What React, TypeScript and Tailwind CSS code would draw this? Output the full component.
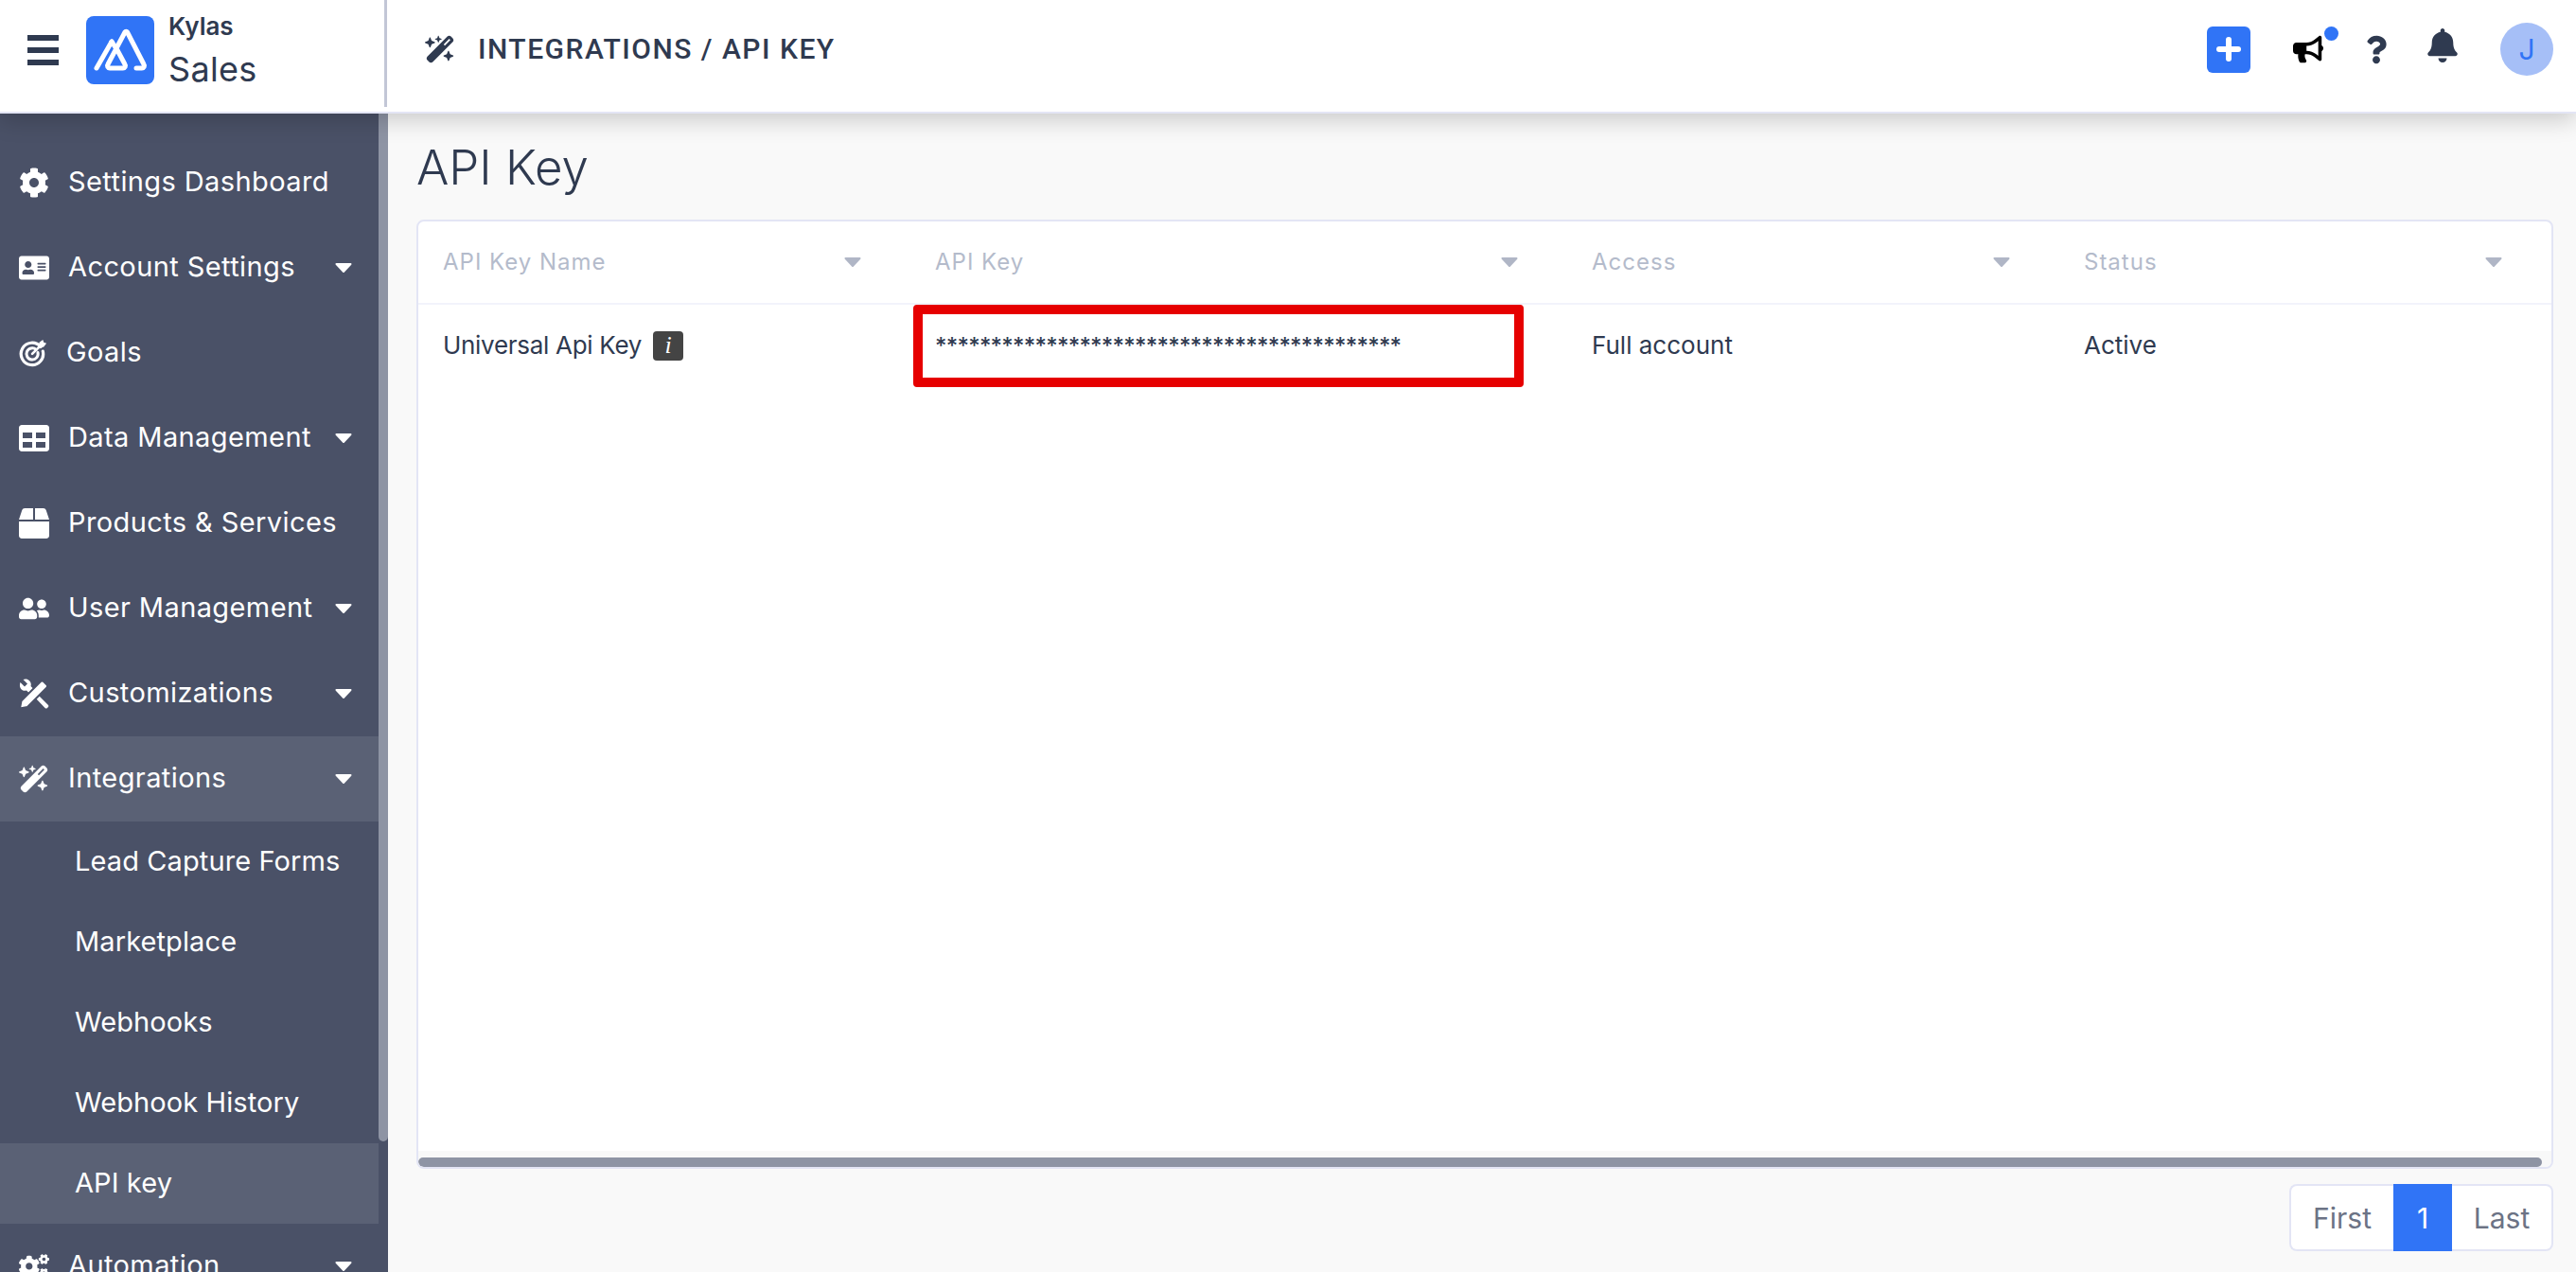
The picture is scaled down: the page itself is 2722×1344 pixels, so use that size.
import type { ReactNode } from "react";
import { FaBell, FaBox, FaBullhorn, FaCog, FaCogs, FaQuestion, FaTable, FaUserFriends, FaAddressCard } from "react-icons/fa";
import { FaWandMagicSparkles } from "react-icons/fa6";

const Caret = ({ className }: { className: string }) => (
  <svg viewBox="0 0 18 10" className={className}>
    <path d="M1.5 1 H16.5 L9 9 Z" fill="currentColor" stroke="currentColor" strokeWidth="2" strokeLinejoin="round" />
  </svg>
);

const GoalIcon = () => (
  <svg viewBox="0 0 32 32" className="w-[30px] h-[32px]" fill="none" stroke="currentColor">
    <path d="M24.5 9 A12.5 12.5 0 1 0 27 14" strokeWidth="3.4" strokeLinecap="round" />
    <path d="M19.5 12.3 A6.5 6.5 0 1 0 21.3 15.4" strokeWidth="3.2" strokeLinecap="round" />
    <path d="M15 17 L25 7" strokeWidth="2.8" strokeLinecap="round" />
    <path d="M22 9 L23 4 L27 1 L28 4 L31 5 L28 9 L23.5 10.5 Z" fill="currentColor" stroke="none" />
  </svg>
);

const ToolsIcon = () => (
  <svg viewBox="0 0 32 32" className="w-[32px] h-[32px]" fill="currentColor">
    <path d="M1.5 4 L6 8.5 L9 5.5 L4.5 1 C9 -1 14 3 12.5 8 L15 10.5 L10.5 15 L8 12.5 C3 14 -0.5 9 1.5 4 Z" />
    <path d="M18 21 L21 18 L30.5 27.5 A2 2 0 0 1 30.5 30.5 L30 31 A2 2 0 0 1 27.5 31 Z" />
    <path d="M1 31.5 L2.5 23.5 L23 3 A2.5 2.5 0 0 1 26 3 L29.5 6.5 A2.5 2.5 0 0 1 29.5 9.5 L9 30 Z" stroke="#4a5167" strokeWidth="2" />
  </svg>
);

const Logo = () => (
  <div className="w-[72px] h-[72px] rounded-[8px] bg-[#3074f6]">
    <svg viewBox="0 0 72 72" className="w-full h-full" fill="none" stroke="white" strokeWidth="5" strokeLinecap="round" strokeLinejoin="round">
      <path d="M11 55 L27 27" />
      <path d="M27 27 L31 33" />
      <path d="M53 55 H59 A2.5 2.5 0 0 0 61 51 L43.5 17 A1.5 1.5 0 0 0 41 17 L23 51 A2.5 2.5 0 0 0 25 55 H39 A2.5 2.5 0 0 0 41 51 L33 36" />
    </svg>
  </div>
);

const NavItem = ({ icon, label, caret, active, boxClass }: { icon: ReactNode; label: string; caret?: boolean; active?: boolean; boxClass?: string }) => (
  <div className={`h-[90px] shrink-0 flex items-center pl-[20px] pr-[28px] text-white ${active ? "bg-[#5a6175]" : ""}`}>
    <div className={boxClass ?? "w-[52px]"}>{icon}</div>
    <span className="pb-[3px] text-[29px] leading-none tracking-[0.4px]">{label}</span>
    {caret && <Caret className="w-[18px] h-[10px] ml-auto" />}
  </div>
);

const SubItem = ({ label, active }: { label: string; active?: boolean }) => (
  <div className={`h-[85px] shrink-0 flex items-center pl-[79px] pb-[3px] text-[29px] leading-none tracking-[0.1px] text-white ${active ? "bg-[#5a6175]" : ""}`}>{label}</div>
);

const HeadCell = ({ label }: { label: string }) => (
  <div className="flex items-center justify-between pl-[26px] pr-[52px]">
    <span className="text-[24px] leading-none tracking-[1px] text-[#b4bbcb]">{label}</span>
    <Caret className="w-[18px] h-[10px] text-[#b0b6c6]" />
  </div>
);

const iconClass = "w-[32px] h-[32px]";

export default function App() {
  return (
    <div className="h-screen overflow-hidden flex flex-col bg-[#f9f9f9] font-[Inter,sans-serif] text-[#2f3a50]">
      <header className="relative z-10 h-[120px] shrink-0 flex bg-white border-b-2 border-[#e3e5f5] shadow-[0_6px_24px_rgba(0,0,0,0.2)]">
        <div className="w-[406px] flex items-center pl-[29px] pb-[12px]">
          <div className="flex flex-col gap-[7px] w-[33px]">
            <span className="h-[6px] bg-[#2f3a50]" />
            <span className="h-[6px] bg-[#2f3a50]" />
            <span className="h-[6px] bg-[#2f3a50]" />
          </div>
          <div className="ml-[29px]"><Logo /></div>
          <div className="ml-[15px] flex flex-col gap-[8px] pb-[3px]">
            <span className="text-[26px] leading-[34px] font-semibold">Kylas</span>
            <span className="text-[36px] leading-[40px] tracking-[0.3px]">Sales</span>
          </div>
        </div>
        <div className="w-[3px] h-[113px] bg-[#c2c6d6]" />
        <div className="flex-1 flex items-center pl-[40px] pb-[14px]">
          <FaWandMagicSparkles className="w-[32px] h-[32px]" />
          <span className="ml-[24px] font-[Roboto,sans-serif] text-[30px] leading-none font-medium tracking-[1.5px]">INTEGRATIONS / API KEY</span>
        </div>
        <div className="flex items-center pr-[24px] pb-[14px]">
          <div className="w-[46px] h-[49px] rounded-[6px] bg-[#3074f6] flex items-center justify-center">
            <span className="relative block w-[26px] h-[26px]">
              <span className="absolute left-[10px] top-0 w-[6px] h-[26px] rounded-full bg-white" />
              <span className="absolute left-0 top-[10px] w-[26px] h-[6px] rounded-full bg-white" />
            </span>
          </div>
          <div className="relative ml-[45px]">
            <FaBullhorn className="w-[32px] h-[32px] text-black" />
            <span className="absolute -top-[8px] -right-[16px] w-[15px] h-[15px] rounded-full bg-[#3074f6]" />
          </div>
          <FaQuestion className="ml-[45px] w-[22px] h-[31px]" />
          <FaBell className="ml-[43px] w-[32px] h-[36px] -mt-[8px]" />
          <div className="ml-[45px] w-[56px] h-[56px] rounded-full bg-[#a6bff7] flex items-center justify-center text-[30px] leading-none text-[#3074f6]">J</div>
        </div>
      </header>

      <div className="flex-1 flex min-h-0">
        <aside className="w-[410px] shrink-0 flex bg-[#4a5167] overflow-hidden">
          <nav className="w-[400px] shrink-0 pt-[28px] flex flex-col">
            <NavItem icon={<FaCog className={iconClass} />} label="Settings Dashboard" />
            <NavItem icon={<FaAddressCard className={iconClass} />} label="Account Settings" caret />
            <NavItem icon={<GoalIcon />} label="Goals" boxClass="w-[50px]" />
            <NavItem icon={<FaTable className={iconClass} />} label="Data Management" caret />
            <NavItem icon={<FaBox className={iconClass} />} label="Products & Services" />
            <NavItem icon={<FaUserFriends className={iconClass} />} label="User Management" caret />
            <NavItem icon={<ToolsIcon />} label="Customizations" caret />
            <NavItem icon={<FaWandMagicSparkles className={iconClass} />} label="Integrations" caret active />
            <SubItem label="Lead Capture Forms" />
            <SubItem label="Marketplace" />
            <SubItem label="Webhooks" />
            <SubItem label="Webhook History" />
            <SubItem label="API key" active />
            <NavItem icon={<FaCogs className={iconClass} />} label="Automation" caret />
          </nav>
          <div className="w-[10px] h-[1086px] rounded-b-[5px] bg-[#8e94a4]" />
        </aside>

        <main className="flex-1 min-w-0 pl-[30px] pr-[24px] flex flex-col">
          <h1 className="h-[112px] flex items-center text-[51px] leading-none font-light">API Key</h1>
          <div className="h-[1003px] flex flex-col rounded-[8px] border-2 border-[#e3e5f5] overflow-hidden bg-white">
            <div className="h-[88px] shrink-0 grid grid-cols-[520px_694px_520px_1fr] border-b-2 border-[#f2f3fb]">
              <HeadCell label="API Key Name" />
              <HeadCell label="API Key" />
              <HeadCell label="Access" />
              <HeadCell label="Status" />
            </div>
            <div className="flex-1 grid grid-cols-[520px_694px_520px_1fr] text-[26px] leading-none">
              <div className="h-[86px] flex items-center pl-[26px]">
                <span className="tracking-[-0.3px]">Universal Api Key</span>
                <span className="ml-[12px] w-[32px] h-[31px] rounded-[4px] bg-[#444444] flex items-center justify-center font-['Liberation_Serif',serif] italic text-[26px] text-white">i</span>
              </div>
              <div className="relative h-[86px] flex items-center pl-[26px] pt-[2px] text-[24px] font-medium tracking-[-0.77px]">
                {"*".repeat(42)}
                <div className="absolute left-[3px] top-0 w-[645px] h-[87px] rounded-[4px] border-[10px] border-[#e60000]" />
              </div>
              <div className="h-[86px] flex items-center pl-[26px]">Full account</div>
              <div className="h-[86px] flex items-center pl-[26px]">Active</div>
            </div>
            <div className="h-[17px] shrink-0 bg-[#f8f8f8] pt-[7px] pr-[10px]">
              <div className="h-[10px] rounded-full bg-[#8e94a4]" />
            </div>
          </div>
          <div className="mt-[16px] flex justify-end text-[30px] leading-none text-[#6c7385]">
            <div className="w-[110px] h-[71px] flex items-center justify-center bg-white border-2 border-r-0 border-[#e3e5f5] rounded-l-[8px]">First</div>
            <div className="w-[62px] h-[71px] flex items-center justify-center bg-[#3074f6] text-white">1</div>
            <div className="w-[107px] h-[71px] flex items-center justify-center bg-white border-2 border-l-0 border-[#e3e5f5] rounded-r-[8px]">Last</div>
          </div>
        </main>
      </div>
    </div>
  );
}
